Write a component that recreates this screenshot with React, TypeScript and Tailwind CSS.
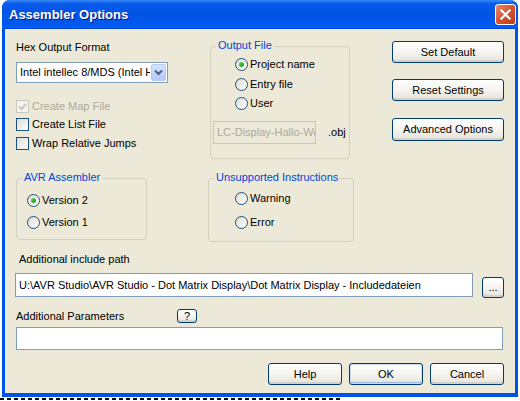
import React from 'react'

const font = "font-['Liberation_Sans',Arial,sans-serif]"

function XPButton({ label, className = '', isDefault = false }: { label: string; className?: string; isDefault?: boolean }) {
  return (
    <div
      className={`flex items-center justify-center rounded-[3px] border border-[#003C74] bg-gradient-to-b from-white via-[#F5F4EF] to-[#E3E2DA] text-[11px] leading-none text-black ${
        isDefault ? 'shadow-[inset_0_0_0_1px_#CEDDF6,inset_0_-1px_0_1px_#9DB7E8]' : 'shadow-[inset_0_-2px_0_#D6D0C5]'
      } ${className}`}
    >
      {label}
    </div>
  )
}

function CheckBox({ label, checked = false, disabled = false }: { label: string; checked?: boolean; disabled?: boolean }) {
  return (
    <div className="flex h-[13px] items-center gap-[3px]">
      <div
        className={`flex h-[13px] w-[13px] items-center justify-center border ${
          disabled ? 'border-[#CAC8BB] bg-[#F4F3EE]' : 'border-[#1C5180] bg-gradient-to-br from-[#DCDCD7] to-white'
        }`}
      >
        {checked && (
          <svg width="11" height="11" viewBox="0 0 11 11">
            <polyline points="2,5.5 4.5,8 9,3" fill="none" stroke={disabled ? '#CAC8BB' : '#21A121'} strokeWidth="2" />
          </svg>
        )}
      </div>
      <span className={`text-[11px] leading-[13px] ${disabled ? 'text-[#ACA899]' : 'text-black'}`}>{label}</span>
    </div>
  )
}

function Radio({ label, checked = false, className = '' }: { label: string; checked?: boolean; className?: string }) {
  return (
    <div className={`flex h-[13px] items-center gap-[2px] ${className}`}>
      <div className="flex h-[13px] w-[13px] items-center justify-center rounded-full border border-[#1C5180] bg-gradient-to-br from-[#DCDCD7] to-white">
        {checked && <div className="h-[5px] w-[5px] rounded-full bg-gradient-to-br from-[#55D751] to-[#1E961E]" />}
      </div>
      <span className="text-[11px] leading-[13px] text-black">{label}</span>
    </div>
  )
}

function Group({ title, className = '', children }: { title: string; className?: string; children: React.ReactNode }) {
  return (
    <div className={`relative rounded-[4px] border border-[#D0D0BF] ${className}`}>
      <span className="absolute -top-[8px] left-[5px] bg-[#ECE9D8] px-[2px] text-[11px] leading-[13px] text-[#0046D5]">
        {title}
      </span>
      {children}
    </div>
  )
}

export default function App() {
  return (
    <div className={`h-[401px] w-[520px] overflow-hidden bg-white pl-[2px] ${font}`}>
      {/* Window */}
      <div className="flex h-[397px] w-[516px] flex-col rounded-t-[8px] bg-[#0054E3]">
        {/* Title bar */}
        <div className="flex h-[29px] items-center justify-between rounded-t-[8px] bg-[linear-gradient(to_bottom,#3A8CF8_0%,#0A5BEC_12%,#0054E3_45%,#0059EE_85%,#0A5CF5_94%,#003DD0_100%)] pl-[7px] pr-[2px]">
          <span className="text-[13px] font-bold text-white [text-shadow:1px_1px_0_#0A1883]">Assembler Options</span>
          <div className="flex h-[21px] w-[21px] items-center justify-center rounded-[3px] border border-white bg-gradient-to-br from-[#E9876A] via-[#D9522B] to-[#C23A14]">
            <svg width="13" height="13" viewBox="0 0 13 13">
              <path d="M2.5 2.5 L10.5 10.5 M10.5 2.5 L2.5 10.5" stroke="white" strokeWidth="2.2" strokeLinecap="square" />
            </svg>
          </div>
        </div>

        {/* Client area */}
        <div className="mx-[3px] mb-[4px] flex flex-1 flex-col bg-[#ECE9D8] pl-[11px] pt-[12px] text-[11px] text-black">
          {/* Top section */}
          <div className="flex items-start">
            <div className="flex w-[152px] flex-col">
              <span className="h-[13px] leading-[13px]">Hex Output Format</span>
              <div className="mt-[8px] flex h-[21px] items-stretch border border-[#7F9DB9] bg-white">
                <span className="flex-1 overflow-hidden whitespace-nowrap pl-[3px] leading-[19px]">Intel intellec 8/MDS (Intel Hex)</span>
                <div className="m-px flex w-[15px] items-center justify-center rounded-[2px] border border-[#B7CAF5] bg-gradient-to-b from-[#D6E3FD] to-[#B5C8F7]">
                  <svg width="9" height="7" viewBox="0 0 9 7">
                    <path d="M1 1.5 L4.5 5 L8 1.5" fill="none" stroke="#4D6185" strokeWidth="2" />
                  </svg>
                </div>
              </div>
              <div className="mt-[17px]">
                <CheckBox label="Create Map File" checked disabled />
              </div>
              <div className="mt-[5px]">
                <CheckBox label="Create List File" />
              </div>
              <div className="mt-[6px]">
                <CheckBox label="Wrap Relative Jumps" />
              </div>
            </div>

            <Group title="Output File" className="ml-[42px] mt-[5px] h-[113px] w-[140px]">
              <div className="flex flex-col pl-[24px] pt-[11px]">
                <Radio label="Project name" checked />
                <Radio label="Entry file" className="mt-[7px]" />
                <Radio label="User" className="mt-[6px]" />
              </div>
              <div className="ml-[2px] mt-[11px] flex items-center">
                <div className="h-[23px] w-[103px] overflow-hidden whitespace-nowrap border border-[#C9C7BA] pl-[3px] leading-[21px] text-[#ACA899]">
                  LC-Display-Hallo-Welt
                </div>
                <span className="ml-[12px]">.obj</span>
              </div>
            </Group>

            <div className="ml-[42px] flex flex-col">
              <XPButton label="Set Default" className="h-[22px] w-[112px]" />
              <XPButton label="Reset Settings" className="mt-[16px] h-[22px] w-[112px]" />
              <XPButton label="Advanced Options" className="mt-[17px] h-[23px] w-[112px]" />
            </div>
          </div>

          {/* Second section */}
          <div className="mt-[19px] flex items-start">
            <Group title="AVR Assembler" className="h-[62px] w-[131px]">
              <div className="flex flex-col pl-[10px] pt-[15px]">
                <Radio label="Version 2" checked />
                <Radio label="Version 1" className="mt-[9px]" />
              </div>
            </Group>
            <Group title="Unsupported Instructions" className="ml-[61px] h-[64px] w-[146px]">
              <div className="flex flex-col pl-[26px] pt-[13px]">
                <Radio label="Warning" />
                <Radio label="Error" className="mt-[11px]" />
              </div>
            </Group>
          </div>

          <span className="ml-[3px] mt-[11px] h-[13px] leading-[13px]">Additional include path</span>
          <div className="mt-[7px] flex items-start">
            <div className="-ml-px h-[24px] w-[458px] overflow-hidden whitespace-nowrap border border-[#7F9DB9] bg-white pl-[3px] leading-[22px]">
              U:\AVR Studio\AVR Studio - Dot Matrix Display\Dot Matrix Display - Includedateien
            </div>
            <XPButton label="..." className="ml-[9px] mt-[4px] h-[21px] w-[22px] items-end pb-[4px]" />
          </div>

          <div className="mt-[11px] flex h-[14px] items-center">
            <span className="w-[161px] leading-[13px]">Additional Parameters</span>
            <XPButton label="?" className="h-[14px] w-[20px]" />
          </div>
          <div className="mt-[4px] h-[23px] w-[487px] border border-[#7F9DB9] bg-white" />

          <div className="mt-[13px] flex justify-end pr-[11px]">
            <XPButton label="Help" className="h-[22px] w-[74px]" />
            <XPButton label="OK" isDefault className="ml-[7px] h-[22px] w-[74px]" />
            <XPButton label="Cancel" className="ml-[7px] h-[22px] w-[74px]" />
          </div>
        </div>
      </div>
      <div className="-ml-[2px] mt-[1px] h-[2px] w-[340px] bg-[repeating-linear-gradient(to_right,#000_0_4px,transparent_4px_7px)]" />
    </div>
  )
}
